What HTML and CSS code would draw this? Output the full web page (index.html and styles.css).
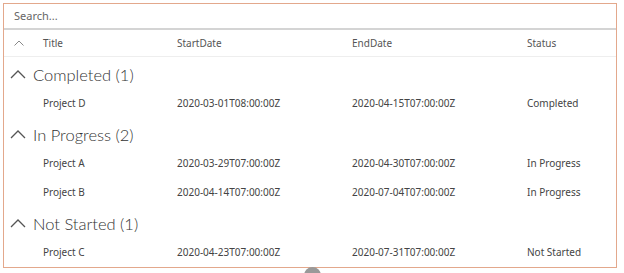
FILE: index.html
```html
<!DOCTYPE html>
<html>
<head>
<meta charset="utf-8">
<link rel="stylesheet" href="styles.css">
</head>
<body>
<div class="frame">
  <div class="search">Search...</div>
  <div class="head row">
    <span class="hchev"><svg width="10" height="6" viewBox="0 0 10 6"><path d="M0.5 5.5 L5 1 L9.5 5.5" fill="none" stroke="#888" stroke-width="1"/></svg></span>
    <span class="c1">Title</span><span class="c2">StartDate</span><span class="c3">EndDate</span><span class="c4">Status</span>
  </div>
  <div class="group"><svg class="gchev" width="16" height="10" viewBox="0 0 16 10"><path d="M1 9 L8 2 L15 9" fill="none" stroke="#555" stroke-width="1.3"/></svg><span>Completed (1)</span></div>
  <div class="row item"><span class="hchev"></span><span class="c1">Project D</span><span class="c2">2020-03-01T08:00:00Z</span><span class="c3">2020-04-15T07:00:00Z</span><span class="c4">Completed</span></div>
  <div class="group"><svg class="gchev" width="16" height="10" viewBox="0 0 16 10"><path d="M1 9 L8 2 L15 9" fill="none" stroke="#555" stroke-width="1.3"/></svg><span>In Progress (2)</span></div>
  <div class="row item"><span class="hchev"></span><span class="c1">Project A</span><span class="c2">2020-03-29T07:00:00Z</span><span class="c3">2020-04-30T07:00:00Z</span><span class="c4">In Progress</span></div>
  <div class="row item"><span class="hchev"></span><span class="c1">Project B</span><span class="c2">2020-04-14T07:00:00Z</span><span class="c3">2020-07-04T07:00:00Z</span><span class="c4">In Progress</span></div>
  <div class="group"><svg class="gchev" width="16" height="10" viewBox="0 0 16 10"><path d="M1 9 L8 2 L15 9" fill="none" stroke="#555" stroke-width="1.3"/></svg><span>Not Started (1)</span></div>
  <div class="row item"><span class="hchev"></span><span class="c1">Project C</span><span class="c2">2020-04-23T07:00:00Z</span><span class="c3">2020-07-31T07:00:00Z</span><span class="c4">Not Started</span></div>
</div>
<div class="knob"></div>
</body>
</html>
```
FILE: styles.css
```css
html, body { margin: 0; padding: 0; background: #fff; }
body { width: 624px; height: 273px; position: relative; overflow: hidden;
  font-family: "Noto Sans", "Open Sans", sans-serif; color: #444; }
.frame { position: absolute; left: 3px; top: 3px; width: 612px; height: 263px;
  border: 1.5px solid #e3a88c; box-sizing: content-box; }
.search { height: 24px; line-height: 24px; padding-left: 10px; font-size: 11px; color: #666;
  border-bottom: 2px solid #d4d4d4; }
.row { display: flex; align-items: center; font-size: 10px; }
.head { height: 26px; border-bottom: 1px solid #eee; color: #555; }
.hchev { width: 39px; padding-left: 10px; box-sizing: border-box; display: flex; align-items: center; }
.c1 { width: 134px; }
.c2 { width: 175px; }
.c3 { width: 175px; }
.c4 { flex: 1; }
.group { height: 31px; padding-top: 5px; box-sizing: border-box; display: flex; align-items: center; padding-left: 6px;
  font-family: Lato, "Noto Sans", sans-serif; font-size: 16.5px; font-weight: 300; color: #333; }
.gchev { margin-right: 7px; margin-top: -2px; }
.item { height: 29px; }
.knob { position: absolute; left: 304px; top: 267px; width: 17px; height: 17px; border-radius: 50%; background: #999; }
```
